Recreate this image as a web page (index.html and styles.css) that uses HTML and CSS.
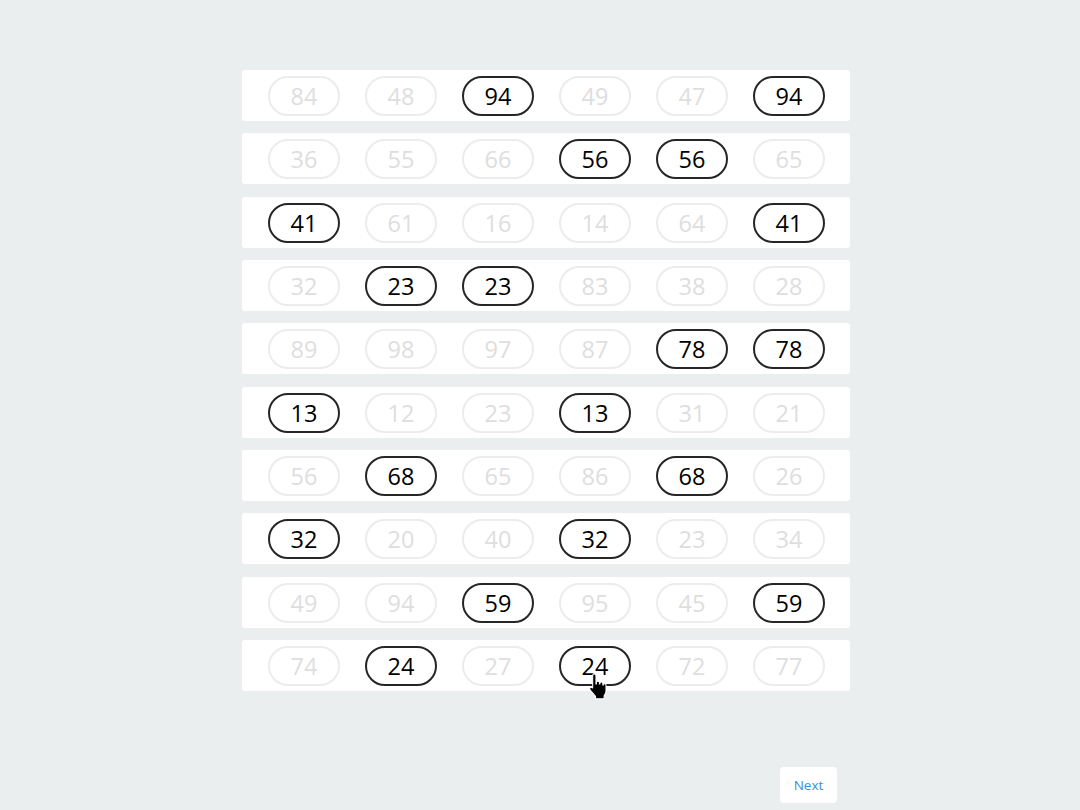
FILE: index.html
```html
<!DOCTYPE html>
<html>
<head>
<meta charset="utf-8">
<link rel="stylesheet" href="styles.css">
</head>
<body>
<div class="page">
  <div class="grid">
    <div class="row"><span class="pill">84</span><span class="pill">48</span><span class="pill on">94</span><span class="pill">49</span><span class="pill">47</span><span class="pill on">94</span></div>
    <div class="row"><span class="pill">36</span><span class="pill">55</span><span class="pill">66</span><span class="pill on">56</span><span class="pill on">56</span><span class="pill">65</span></div>
    <div class="row"><span class="pill on">41</span><span class="pill">61</span><span class="pill">16</span><span class="pill">14</span><span class="pill">64</span><span class="pill on">41</span></div>
    <div class="row"><span class="pill">32</span><span class="pill on">23</span><span class="pill on">23</span><span class="pill">83</span><span class="pill">38</span><span class="pill">28</span></div>
    <div class="row"><span class="pill">89</span><span class="pill">98</span><span class="pill">97</span><span class="pill">87</span><span class="pill on">78</span><span class="pill on">78</span></div>
    <div class="row"><span class="pill on">13</span><span class="pill">12</span><span class="pill">23</span><span class="pill on">13</span><span class="pill">31</span><span class="pill">21</span></div>
    <div class="row"><span class="pill">56</span><span class="pill on">68</span><span class="pill">65</span><span class="pill">86</span><span class="pill on">68</span><span class="pill">26</span></div>
    <div class="row"><span class="pill on">32</span><span class="pill">20</span><span class="pill">40</span><span class="pill on">32</span><span class="pill">23</span><span class="pill">34</span></div>
    <div class="row"><span class="pill">49</span><span class="pill">94</span><span class="pill on">59</span><span class="pill">95</span><span class="pill">45</span><span class="pill on">59</span></div>
    <div class="row"><span class="pill">74</span><span class="pill on">24</span><span class="pill">27</span><span class="pill on cursor-host">24<svg class="cursor" width="19" height="28" viewBox="0 0 18 26"><path d="M5 1.5c1 0 1.6.7 1.6 1.6V11h.4V9.8c0-.9.7-1.4 1.5-1.4s1.4.6 1.4 1.4V11h.4v-.6c0-.8.7-1.3 1.4-1.3s1.4.6 1.4 1.3V12h.4c0-.8.6-1.2 1.3-1.2s1.3.5 1.3 1.3v5.6c0 2.2-.9 3.4-1.8 4.6V25H6.2v-2.3C4.6 21 2.2 18.4 1 16.6c-.6-.9-.4-1.8.3-2.2.7-.4 1.5-.2 2.1.5l.1.2V3.1C3.5 2.2 4.1 1.5 5 1.5z" fill="#000" stroke="#fff" stroke-width="1"/></svg></span><span class="pill">72</span><span class="pill">77</span></div>
  </div>
  <div class="footer"><button class="next">Next</button></div>
</div>
</body>
</html>
```
FILE: styles.css
```css
html, body {
  margin: 0;
  padding: 0;
  background: #ebeeef;
  height: 100%;
}
body {
  font-family: "Open Sans", "Noto Sans", sans-serif;
  overflow: hidden;
}
.page {
  width: 1080px;
  height: 810px;
  position: relative;
}
.grid {
  position: absolute;
  left: 242px;
  top: 70px;
  width: 608px;
  display: flex;
  flex-direction: column;
  gap: 13.33px;
}
.row {
  height: 51px;
  margin-bottom: -1px;
  background: #fff;
  border-radius: 3px;
  display: flex;
  align-items: center;
  justify-content: space-between;
  padding: 1px 25px 0 26px;
  box-sizing: border-box;
}
.pill {
  width: 72px;
  height: 40px;
  box-sizing: border-box;
  border: 2px solid #ececec;
  border-radius: 20px;
  display: flex;
  align-items: center;
  justify-content: center;
  font-size: 23.5px;
  color: #dedede;
  position: relative;
}
.pill.on {
  border-color: #262626;
  color: #000;
}
.cursor {
  position: absolute;
  left: 28px;
  top: 24px;
}
.footer {
  position: absolute;
  left: 780px;
  top: 767px;
}
.next {
  width: 57px;
  height: 36px;
  background: #fff;
  border: none;
  border-radius: 4px;
  color: #3a8ddb;
  font-family: "Open Sans", "Noto Sans", sans-serif;
  font-size: 13.5px;
  padding: 0;
  cursor: pointer;
}
```
